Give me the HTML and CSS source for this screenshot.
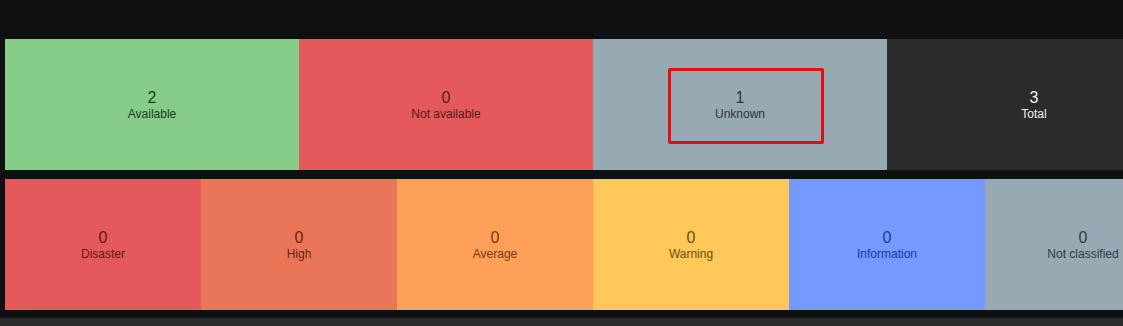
FILE: index.html
```html
<!DOCTYPE html>
<html lang="en">
<head>
<meta charset="UTF-8">
<title>Host availability and problems</title>
<link rel="stylesheet" href="styles.css">
</head>
<body>
<div class="dashboard">
<div class="widget">
<div class="totals four">
<div class="cell available"><span class="count">2</span><span class="name">Available</span></div>
<div class="cell not-available"><span class="count">0</span><span class="name">Not available</span></div>
<div class="cell unknown marked"><span class="count">1</span><span class="name">Unknown</span></div>
<div class="cell total"><span class="count">3</span><span class="name">Total</span></div>
</div>
</div>
<div class="widget">
<div class="totals six">
<div class="cell disaster"><span class="count">0</span><span class="name">Disaster</span></div>
<div class="cell high"><span class="count">0</span><span class="name">High</span></div>
<div class="cell average"><span class="count">0</span><span class="name">Average</span></div>
<div class="cell warning"><span class="count">0</span><span class="name">Warning</span></div>
<div class="cell info"><span class="count">0</span><span class="name">Information</span></div>
<div class="cell not-classified"><span class="count">0</span><span class="name">Not classified</span></div>
</div>
</div>
<div class="next-widget"></div>
</div>
</body>
</html>
```

FILE: styles.css
```css
html, body { margin:0; padding:0; overflow:hidden; }
body { background:#0e1012; font-family:'Liberation Sans', Arial, sans-serif; height:326px; }
.dashboard { padding-top:39px; padding-left:5px; display:flex; flex-direction:column; gap:9px; width:1176px; }
.widget { height:131px; }
.totals { display:grid; height:100%; }
.totals.four { grid-template-columns:repeat(4, 294px); }
.totals.six { grid-template-columns:repeat(6, 196px); }
.cell { display:flex; flex-direction:column; align-items:center; justify-content:center; text-align:center; padding-bottom:1px; }
.count { font-size:16px; line-height:19px; }
.name { font-size:12px; line-height:14px; }
.marked { position:relative; }
.marked::after { content:''; position:absolute; left:75px; top:29px; width:150px; height:70px; border:3px solid #e01010; border-radius:2px; }
.available { background:#86cc89; color:#1f3a21; }
.not-available { background:#e45959; color:#5a1a1a; }
.unknown { background:#97aab3; color:#2b343c; }
.total { background:#2b2b2b; color:#f2f2f2; }
.disaster { background:#e45959; color:#6a1515; }
.high { background:#e97659; color:#6b2410; }
.average { background:#ffa059; color:#7a3a0c; }
.warning { background:#ffc859; color:#6a5106; }
.info { background:#7499ff; color:#1838a8; }
.not-classified { background:#97aab3; color:#2f3a44; }
.next-widget { margin-top:-1px; height:20px; background:#2b2b2b; margin-left:-5px; width:1128px; }
```
